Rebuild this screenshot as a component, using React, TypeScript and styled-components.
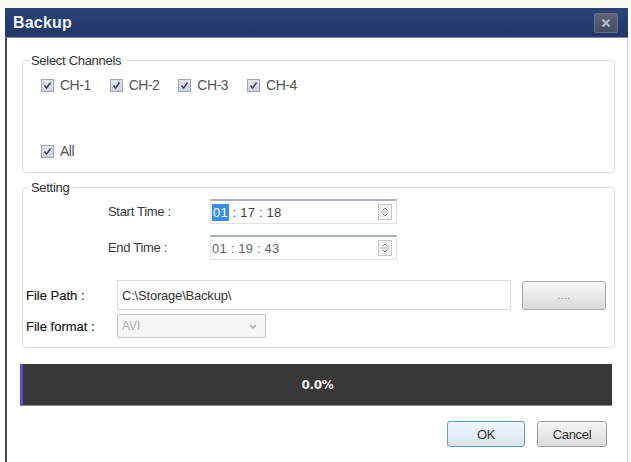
import React from 'react'
import styled, { createGlobalStyle } from 'styled-components'

const GlobalStyle = createGlobalStyle`
  html, body {
    margin: 0;
    padding: 0;
    background: #ffffff;
  }
  body {
    font-family: "Liberation Sans", Arial, sans-serif;
    width: 631px;
    height: 462px;
    overflow: hidden;
  }
`

const Page = styled.div`
  height: 462px;
  padding: 8px 0 0 5px;
  box-sizing: border-box;
  background: linear-gradient(#fbf9f1 0, #fbf9f1 8px, #ffffff 8px);
`

const Dialog = styled.div`
  width: 623px;
  height: 454px;
  box-sizing: border-box;
  border-left: 2px solid #4a4a4a;
  border-right: 1px solid #d4d4d4;
  background: #fff;
  display: flex;
  flex-direction: column;
`

const TitleBar = styled.div`
  height: 30px;
  box-sizing: border-box;
  margin-left: -2px;
  margin-right: -1px;
  padding: 0 10px 0 8px;
  display: flex;
  align-items: center;
  justify-content: space-between;
  background: linear-gradient(#2b4476, #223667);
  border-bottom: 1px solid #7a8bb0;
`

const Title = styled.span`
  color: #f2f4fa;
  font-size: 16px;
  font-weight: 700;
  letter-spacing: 0.2px;
`

const CloseButton = styled.div`
  width: 24px;
  height: 20px;
  box-sizing: border-box;
  border: 1px solid #66708a;
  border-radius: 2px;
  background: linear-gradient(#5a6377, #464e62);
  display: flex;
  align-items: center;
  justify-content: center;
`

const Body = styled.div`
  padding: 15px 12px 0 15px;
  display: flex;
  flex-direction: column;
`

const Group = styled.fieldset<{ $height: number; $gap?: number }>`
  margin: ${(p) => p.$gap ?? 0}px 0 0 0;
  padding: 0;
  height: ${(p) => p.$height}px;
  box-sizing: border-box;
  border: 1px solid #dedede;
  border-radius: 4px;
  min-width: 0;
`

const Legend = styled.legend`
  margin-left: 6px;
  padding: 0 2px;
  font-size: 13px;
  line-height: 15px;
  color: #333;
  letter-spacing: -0.3px;
`

const ChannelBox = styled.div`
  display: flex;
  flex-direction: column;
  justify-content: space-between;
  height: 82px;
  padding: 9px 0 0 18px;
`

const CheckRow = styled.div`
  display: flex;
  gap: 19px;
`

const Check = styled.label`
  display: flex;
  align-items: center;
  gap: 6px;
  font-size: 14px;
  color: #555;
  letter-spacing: -0.5px;
`

const Box = styled.span`
  width: 13px;
  height: 13px;
  box-sizing: border-box;
  border: 1px solid #9ea3b8;
  background: linear-gradient(#e4e7f0, #cfd3e0);
  display: flex;
  align-items: center;
  justify-content: center;
`

const SettingBody = styled.div`
  display: flex;
  flex-direction: column;
  padding: 4px 0 0 3px;
`

const TimeRow = styled.div`
  display: flex;
  align-items: center;
  margin: 0 0 11px 82px;
`

const Label = styled.span<{ $width: number; $strong?: boolean }>`
  width: ${(p) => p.$width}px;
  font-size: 13px;
  color: ${(p) => (p.$strong ? '#1a1a1a' : '#3a3a3a')};
  letter-spacing: ${(p) => (p.$strong ? '0' : '-0.3px')};
  -webkit-text-stroke: ${(p) => (p.$strong ? '0.2px #1a1a1a' : '0')};
`

const TimeInput = styled.div<{ $dim?: boolean }>`
  width: 187px;
  height: 25px;
  box-sizing: border-box;
  border: 1px solid #e2e2e2;
  border-top: 2px solid #a9b0b8;
  display: flex;
  align-items: center;
  justify-content: space-between;
  padding: 0 4px 0 1px;
  font-size: 13px;
  color: ${(p) => (p.$dim ? '#666' : '#444')};
  letter-spacing: 0.2px;
`

const Selected = styled.span`
  background: #3a8ee6;
  color: #fff;
  padding: 1px 1px;
`

const Spinner = styled.span`
  width: 14px;
  height: 16px;
  box-sizing: border-box;
  border: 1px solid #c8c8c8;
  background: #f1f1f1;
  display: flex;
  align-items: center;
  justify-content: center;
`

const PathRow = styled.div`
  display: flex;
  align-items: center;
  margin-top: 9px;
`

const PathInput = styled.div`
  width: 394px;
  height: 30px;
  box-sizing: border-box;
  border: 1px solid #dcdcdc;
  display: flex;
  align-items: center;
  padding-left: 4px;
  font-size: 13px;
  color: #333;
  letter-spacing: -0.2px;
`

const BrowseButton = styled.div`
  width: 84px;
  height: 29px;
  margin-left: 11px;
  box-sizing: border-box;
  border: 1px solid #a8a8a8;
  border-radius: 3px;
  background: linear-gradient(#f8f8f8, #dadada);
  display: flex;
  align-items: center;
  justify-content: center;
  color: #888;
  font-size: 10px;
  letter-spacing: 0.5px;
`

const FormatRow = styled.div`
  display: flex;
  align-items: center;
  margin-top: 4px;
`

const Combo = styled.div`
  width: 149px;
  height: 24px;
  box-sizing: border-box;
  border: 1px solid #c2c2c2;
  border-radius: 2px;
  background: #f6f6f6;
  display: flex;
  align-items: center;
  justify-content: space-between;
  padding: 0 8px 0 4px;
  font-size: 12px;
  color: #b0b0b0;
`

const Progress = styled.div`
  margin: 16px 0 0 -2px;
  width: 592px;
  height: 42px;
  box-sizing: border-box;
  background: #383838;
  border-left: 3px solid #5a4fd0;
  border-bottom: 1px solid #8a8a8a;
  display: flex;
  align-items: center;
  justify-content: center;
  color: #f4f4f4;
  font-family: "DejaVu Sans", sans-serif;
  font-weight: 700;
  font-size: 12px;
  letter-spacing: -0.3px;
`

const Footer = styled.div`
  display: flex;
  justify-content: flex-end;
  gap: 12px;
  margin-top: 15px;
  padding-right: 8px;
`

const Button = styled.div<{ $primary?: boolean; $width: number }>`
  width: ${(p) => p.$width}px;
  height: 26px;
  box-sizing: border-box;
  border: 1px solid ${(p) => (p.$primary ? '#5f9cc2' : '#9a9a9a')};
  border-radius: 3px;
  background: ${(p) =>
    p.$primary ? 'linear-gradient(#f1f7fb, #d7e5ee)' : 'linear-gradient(#f6f6f6, #dcdcdc)'};
  display: flex;
  align-items: center;
  justify-content: center;
  font-size: 13px;
  color: #333;
  letter-spacing: -0.3px;
`

const CheckMark = () => (
  <svg width="9" height="9" viewBox="0 0 9 9">
    <path d="M1.5 4.5 L3.6 7 L7.6 1.5" fill="none" stroke="#3c4660" strokeWidth="1.5" />
  </svg>
)

const CheckItem = ({ label }: { label: string }) => (
  <Check>
    <Box>
      <CheckMark />
    </Box>
    {label}
  </Check>
)

const SpinIcon = () => (
  <Spinner>
    <svg width="10" height="12" viewBox="0 0 10 12">
      <path d="M2.5 4.5 L5 2 L7.5 4.5" fill="none" stroke="#8a8a8a" strokeWidth="1" />
      <path d="M1 6 H9" stroke="#b8b8b8" strokeWidth="1" />
      <path d="M2.5 7.5 L5 10 L7.5 7.5" fill="none" stroke="#8a8a8a" strokeWidth="1" />
    </svg>
  </Spinner>
)

const App = () => {
  const channels = ['CH-1', 'CH-2', 'CH-3', 'CH-4']

  return (
    <>
      <GlobalStyle />
      <Page>
        <Dialog>
          <TitleBar>
            <Title>Backup</Title>
            <CloseButton>
              <svg width="12" height="12" viewBox="0 0 12 12">
                <path d="M2.5 2.5 L9.5 9.5 M9.5 2.5 L2.5 9.5" stroke="#b9bfcb" strokeWidth="1.8" />
              </svg>
            </CloseButton>
          </TitleBar>

          <Body>
            <Group $height={120}>
              <Legend>Select Channels</Legend>
              <ChannelBox>
                <CheckRow>
                  {channels.map((c) => (
                    <CheckItem key={c} label={c} />
                  ))}
                </CheckRow>
                <CheckRow>
                  <CheckItem label="All" />
                </CheckRow>
              </ChannelBox>
            </Group>

            <Group $height={168} $gap={7}>
              <Legend>Setting</Legend>
              <SettingBody>
                <TimeRow>
                  <Label $width={102}>Start Time :</Label>
                  <TimeInput>
                    <span>
                      <Selected>01</Selected> : 17 : 18
                    </span>
                    <SpinIcon />
                  </TimeInput>
                </TimeRow>
                <TimeRow>
                  <Label $width={102}>End Time :</Label>
                  <TimeInput $dim>
                    <span>01 : 19 : 43</span>
                    <SpinIcon />
                  </TimeInput>
                </TimeRow>

                <PathRow>
                  <Label $width={91} $strong>File Path :</Label>
                  <PathInput>C:\Storage\Backup\</PathInput>
                  <BrowseButton>....</BrowseButton>
                </PathRow>

                <FormatRow>
                  <Label $width={91} $strong>File format :</Label>
                  <Combo>
                    <span>AVI</span>
                    <svg width="8" height="5" viewBox="0 0 8 5">
                      <path d="M1 1 L4 4 L7 1" fill="none" stroke="#a0a0a0" strokeWidth="1.2" />
                    </svg>
                  </Combo>
                </FormatRow>
              </SettingBody>
            </Group>

            <Progress>0.0%</Progress>

            <Footer>
              <Button $primary $width={78}>OK</Button>
              <Button $width={70}>Cancel</Button>
            </Footer>
          </Body>
        </Dialog>
      </Page>
    </>
  )
}

export default App
